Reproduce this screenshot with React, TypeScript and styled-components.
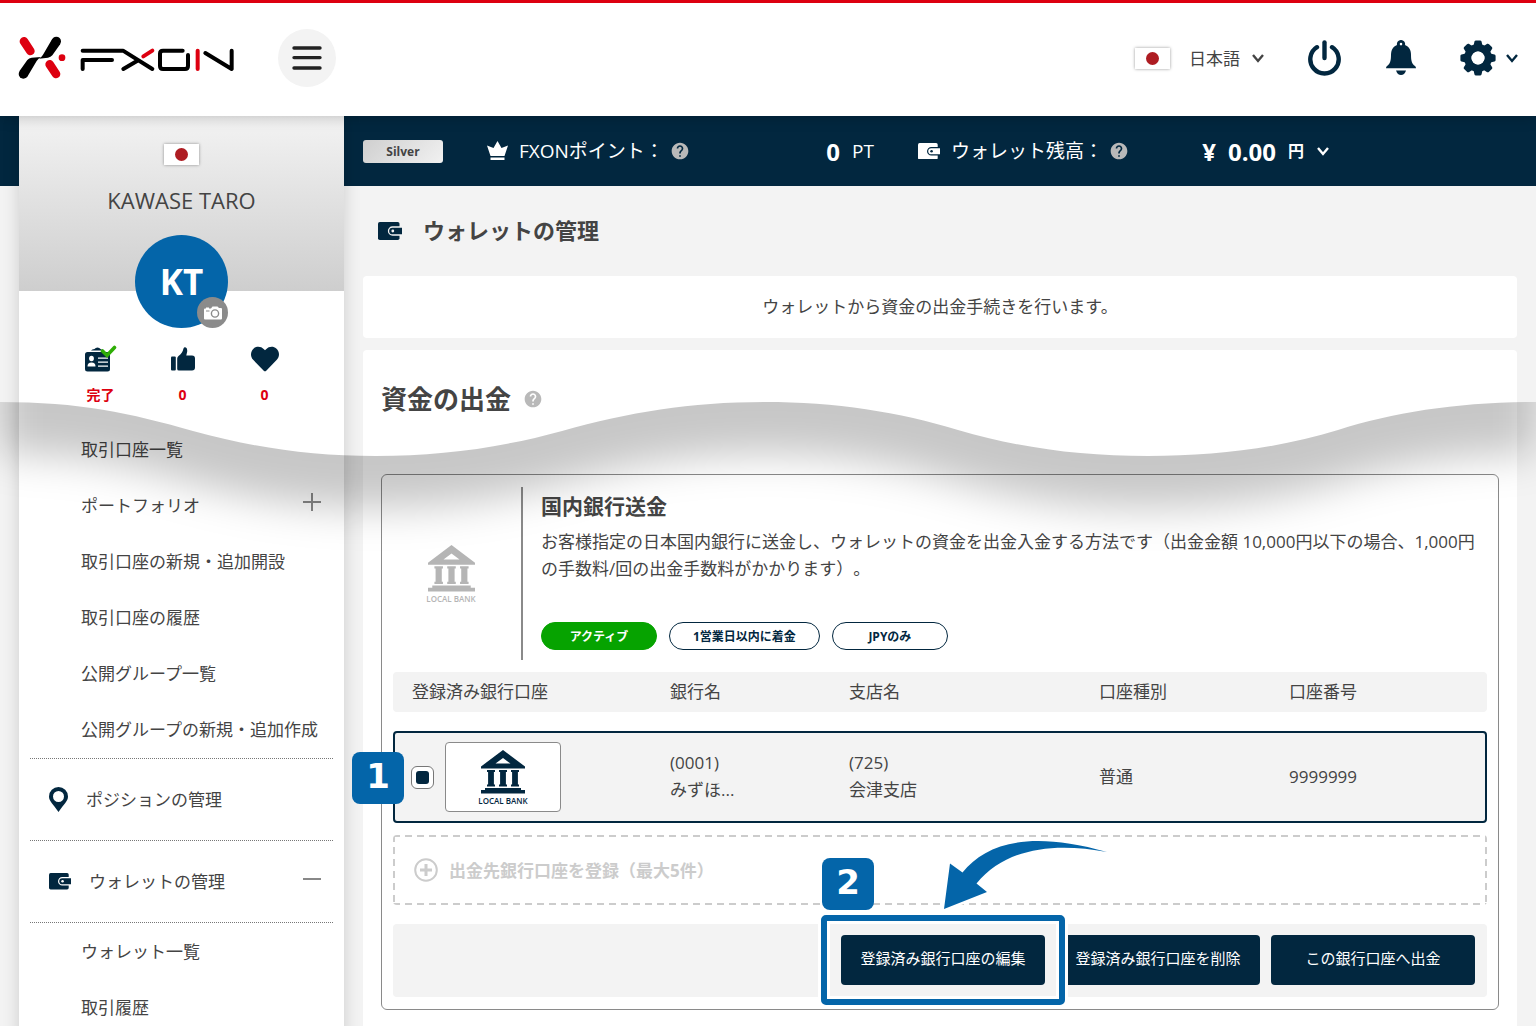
import React from "react";
import styled, { createGlobalStyle } from "styled-components";
import { FaHeart } from "react-icons/fa";
import { MdHelp } from "react-icons/md";

const navy = "#02273f";
const blue = "#0465a9";
const red = "#dd0010";
const ink = "#444";
const pale = "#f3f3f3";
const line = "#8a8a8a";

const Global = createGlobalStyle`
  *, *::before, *::after { box-sizing: border-box; }
  body {
    margin: 0;
    background: ${pale};
    color: ${ink};
    font: 400 17px/27px "Open Sans", "Noto Sans CJK JP", sans-serif;
    text-spacing-trim: space-all;
  }
  h1, h2, h3, p, ul { margin: 0; padding: 0; }
  ul { list-style: none; }
  button, select, input { font: inherit; color: inherit; margin: 0; }
  button { padding: 0; border: 0; background: none; cursor: pointer; }
  a { color: inherit; text-decoration: none; }
  svg { display: block; flex: none; }
`;

const Page = styled.div`
  position: relative;
  height: 100vh;
  overflow: hidden;
`;

/* ---------- Header ---------- */

const Header = styled.header`
  position: relative;
  z-index: 2;
  display: flex;
  align-items: center;
  height: 116px;
  padding: 0 18px 3px;
  border-top: 3px solid ${red};
  background: #fff;
  box-shadow: 0 0 14px rgba(0, 0, 0, 0.25);
`;

const MenuButton = styled.button`
  display: grid;
  place-items: center;
  width: 58px;
  height: 58px;
  margin-left: 42px;
  border-radius: 50%;
  background: ${pale};
`;

const HeaderTools = styled.div`
  display: flex;
  align-items: center;
  gap: 44px;
  margin-left: auto;
`;

const Picker = styled.label<{ $gap: number }>`
  display: flex;
  align-items: center;
  gap: ${(p) => p.$gap}px;
`;

const PlainSelect = styled.select`
  appearance: none;
  padding: 0;
  border: 0;
  background: none;
  outline: 0;
`;

const ToolButton = styled.button`
  display: flex;
  align-items: center;
  gap: 10px;
  color: ${navy};
`;

const FlagBox = styled.span`
  display: grid;
  place-items: center;
  flex: none;
  width: 35px;
  height: 21px;
  margin-right: 7px;
  background: #fff;
  box-shadow: 0 0 3px rgba(0, 0, 0, 0.4);

  &::before {
    content: "";
    width: 13px;
    height: 13px;
    border-radius: 50%;
    background: #ae1c22;
  }
`;

/* ---------- Body ---------- */

const Body = styled.div`
  display: grid;
  grid-template-columns: 325px minmax(0, 1fr);
  gap: 19px;
  padding: 0 19px;
  background: linear-gradient(${navy} 70px, ${pale} 70px);
`;

const Sidebar = styled.aside`
  background: #fff;
  box-shadow: 0 0 16px rgba(0, 0, 0, 0.16);
`;

const Profile = styled.div`
  display: flex;
  flex-direction: column;
  align-items: center;
  height: 175px;
  padding-top: 28px;
  background: linear-gradient(#f3f3f3, #cecece);

  ${FlagBox} { margin: 0; }
`;

const UserName = styled.p`
  margin: 22px 0 21px;
  font-size: 22px;
`;

const Avatar = styled.div`
  position: relative;
  display: grid;
  place-items: center;
  flex: none;
  width: 93px;
  height: 93px;
  border-radius: 50%;
  background: ${blue};
  color: #fff;
  font-size: 35px;
  font-weight: 700;
`;

const CameraButton = styled.button`
  position: absolute;
  right: 0;
  bottom: 0;
  display: grid;
  place-items: center;
  width: 31px;
  height: 31px;
  border-radius: 50%;
  background: #8b8b8b;
`;

const Stats = styled.ul`
  display: grid;
  grid-template-columns: repeat(3, 82px);
  justify-content: center;
  height: 130px;
  padding: 54px 0 0 2px;
`;

const Stat = styled.li`
  display: flex;
  flex-direction: column;
  align-items: center;
  gap: 8px;
  color: ${red};
  font-size: 14px;
  font-weight: 700;

  svg { height: 28px; color: ${navy}; }
`;

const SubList = styled.ul`
  padding-bottom: 1px;
`;

const SubItem = styled.li`
  display: flex;
  align-items: center;
  justify-content: space-between;
  height: 56px;
  padding: 0 23px 0 62px;
  white-space: nowrap;
`;

const Section = styled.div`
  display: flex;
  align-items: center;
  gap: 18px;
  height: 82px;
  margin: 0 11px;
  padding: 0 12px 0 19px;
  border-top: 1px dotted #777;
`;

const SectionEnd = styled.div`
  margin: 0 11px;
  border-top: 1px dotted #777;
`;

const Toggle = styled.button`
  margin-left: auto;
  padding-bottom: 6px;
`;

/* ---------- Main ---------- */

const StatusBar = styled.div`
  display: flex;
  align-items: center;
  gap: 44px;
  height: 70px;
  color: #fff;
  font-size: 19px;
`;

const Rank = styled.span`
  width: 80px;
  height: 23px;
  border-radius: 3px;
  background: linear-gradient(135deg, #cfcfcf, #f1f1f1);
  color: ${ink};
  font-size: 12px;
  font-weight: 700;
  line-height: 23px;
  text-align: center;
`;

const Balance = styled.div<{ $width: number }>`
  display: flex;
  align-items: center;
  gap: 11px;
  width: ${(p) => p.$width}px;
  white-space: nowrap;
`;

const Amount = styled.span`
  display: flex;
  align-items: center;
  gap: 12px;
  margin-left: auto;

  strong { font-size: 24px; }
  select { font-size: 16px; font-weight: 700; }
`;

const Help = styled.span`
  margin-left: -5px;
  color: #b9b9b9;
  svg { width: 20px; height: 20px; }
`;

const PageTitle = styled.h1`
  display: flex;
  align-items: center;
  gap: 21px;
  height: 90px;
  padding: 0 0 1px 15px;
  font-size: 22px;
`;

const Notice = styled.p`
  margin-bottom: 12px;
  padding: 17px 20px 18px;
  border-radius: 4px;
  background: #fff;
  text-align: center;
`;

const Card = styled.section`
  padding: 33px 18px;
  border-radius: 4px 4px 0 0;
  background: #fff;
`;

const CardTitle = styled.h2`
  display: flex;
  align-items: center;
  gap: 17px;
  margin-bottom: 59px;
  font-size: 26px;
  line-height: 32px;
`;

const Method = styled.div`
  padding: 12px 11px;
  border: 1px solid ${line};
  border-radius: 6px;
`;

const Intro = styled.div`
  display: grid;
  grid-template-columns: 130px minmax(0, 1fr);
  margin-bottom: 12px;
`;

const IntroLogo = styled.div`
  display: grid;
  place-items: center;
  padding-right: 12px;
  border-right: 2px solid ${line};
`;

const IntroText = styled.div`
  padding: 6px 0 10px 18px;

  h3 { margin-bottom: 8px; font-size: 21px; line-height: 27px; }
`;

const Tags = styled.ul`
  display: flex;
  gap: 12px;
  margin-top: 40px;
`;

const Tag = styled.li<{ $active?: boolean }>`
  min-width: 116px;
  padding: 1px 23px 0;
  border: 1px solid ${(p) => (p.$active ? "#06a300" : navy)};
  border-radius: 14px;
  background: ${(p) => (p.$active ? "#06a300" : "#fff")};
  color: ${(p) => (p.$active ? "#fff" : navy)};
  font-size: 12px;
  font-weight: 700;
  line-height: 25px;
  text-align: center;
`;

const BankMark = styled.span<{ $muted?: boolean }>`
  display: flex;
  flex-direction: column;
  align-items: center;
  gap: 3px;
  color: ${(p) => (p.$muted ? "#b5b5b5" : navy)};
  font: 600 8px/8px "Open Sans", sans-serif;
`;

const Accounts = styled.table`
  display: block;
  margin-bottom: 12px;

  thead, tbody { display: block; }
  thead { margin-bottom: 19px; }
  th, td { padding: 0; font-weight: 400; text-align: left; }
  th { padding-bottom: 1px; }
  td + td { padding-bottom: 2px; }
`;

const AccountRow = styled.tr<{ $selected?: boolean }>`
  position: relative;
  display: grid;
  grid-template-columns: 275fr 179fr 250fr 190fr 196fr;
  align-items: center;
  height: ${(p) => (p.$selected ? 92 : 40)}px;
  border: 2px solid ${(p) => (p.$selected ? navy : pale)};
  border-radius: 4px;
  background: ${pale};

  th:first-child { padding-left: 17px; }
`;

const AccountPick = styled.label`
  display: flex;
  align-items: center;
  gap: 11px;
  padding-left: 16px;
`;

const Radio = styled.input`
  appearance: none;
  display: grid;
  place-items: center;
  width: 23px;
  height: 23px;
  border: 1px solid #777;
  border-radius: 6px;
  background: #fff;

  &:checked::before {
    content: "";
    width: 13px;
    height: 13px;
    border-radius: 3px;
    background: ${navy};
  }
`;

const LogoFrame = styled.span`
  display: grid;
  place-items: center;
  width: 116px;
  height: 70px;
  border: 1px solid ${line};
  border-radius: 4px;
  background: #fff;
`;

const dashes = (angle: number) =>
  `repeating-linear-gradient(${angle}deg, #ccc 0 7px, transparent 7px 12px)`;

const AddAccount = styled.button`
  display: flex;
  align-items: center;
  gap: 11px;
  width: 100%;
  height: 70px;
  margin-bottom: 19px;
  padding: 0 21px;
  border-radius: 4px;
  background:
    ${dashes(90)} top / 100% 2px no-repeat,
    ${dashes(90)} bottom / 100% 2px no-repeat,
    ${dashes(180)} left / 2px 100% no-repeat,
    ${dashes(180)} right / 2px 100% no-repeat;
  color: #ccc;
  font-weight: 700;
`;

const Actions = styled.div`
  display: flex;
  justify-content: flex-end;
  gap: 11px;
  padding: 11px 12px 12px;
  border-radius: 4px;
  background: ${pale};
`;

const ActionSlot = styled.div`
  position: relative;
  z-index: 1;
`;

const ActionButton = styled.button`
  width: 204px;
  height: 50px;
  padding-bottom: 3px;
  border-radius: 4px;
  background: ${navy};
  color: #fff;
  font-size: 15px;
`;

/* ---------- Step annotations ---------- */

const StepBadge = styled.span<{ $left: number; $top: number }>`
  position: absolute;
  left: ${(p) => p.$left}px;
  top: ${(p) => p.$top}px;
  width: 52px;
  height: 52px;
  border-radius: 8px;
  background: ${blue};
  color: #fff;
  font: 700 34px/48px "DejaVu Sans", sans-serif;
  text-align: center;
`;

const Highlight = styled.span`
  position: absolute;
  inset: -20px;
  border: 6px solid ${blue};
  border-radius: 5px;
  box-shadow: 0 0 0 3px #fff, inset 0 0 0 3px #fff;
  pointer-events: none;
`;

const ArrowSvg = styled.svg`
  position: absolute;
  left: 103px;
  top: -95px;
  overflow: visible;
  pointer-events: none;
`;

const WaveSvg = styled.svg`
  position: absolute;
  z-index: 1;
  left: 0;
  top: 402px;
  width: 100%;
  height: 200px;
  pointer-events: none;
`;

/* ---------- Drawings ---------- */

const Logo = () => (
  <svg width="218" height="44" viewBox="55 109 654 132" fill="none" strokeLinecap="round" role="img" aria-label="FXON">
    <g stroke={red} strokeWidth="26">
      <path d="M73 125 92 154" />
      <path d="M150 194 169 223" />
    </g>
    <circle cx="187" cy="174" r="10" fill={red} />
    <g fill="#000">
      <circle cx="170" cy="125" r="14" />
      <path d="M158 117 182 133 158 167Q153 173 145 174L118 177Q126 172 130 165Z" />
      <circle cx="71" cy="223" r="14" />
      <path d="M59 215 83 181Q88 175 96 174L124 172Q116 177 111 184L83 231Z" />
    </g>
    <g stroke="#000" strokeWidth="12" strokeLinejoin="round">
      <path d="M249 153H370L458 208" />
      <path d="M249 208V181H337" />
      <path d="M371 208 412 184" />
      <path d="M549 153H490Q481 153 481 162V199Q481 208 490 208H556Q565 208 565 199V166" />
      <path d="M617 160 696 208V153" />
    </g>
    <g stroke={red} strokeWidth="12">
      <path d="M431 170 458 153" />
      <path d="M594 153V208" />
    </g>
  </svg>
);

const Chevron = () => (
  <svg width="12" height="9" viewBox="0 0 12 9" fill="none" stroke="currentColor" strokeWidth="2.4">
    <path d="M1 1 6 7 11 1" />
  </svg>
);

const MenuIcon = () => (
  <svg width="30" height="24" viewBox="0 0 30 24" stroke="#222" strokeWidth="3.4" strokeLinecap="round">
    <path d="M2 2H28M2 11.6H28M2 22H28" />
  </svg>
);

const PowerIcon = () => (
  <svg width="34" height="36" viewBox="0 0 34 36" fill="none" stroke="currentColor" strokeWidth="4.4" strokeLinecap="round">
    <path d="M16.500 2.500V18" />
    <path d="M9 7.200A14.200 14.200 0 1 0 24 7.200" />
  </svg>
);

const BellIcon = () => (
  <svg width="30" height="36" viewBox="0 0 30 36" fill="currentColor">
    <path
      fillRule="evenodd"
      d="M15 0A4 4 0 0 1 19 5C23 6.5 25 10 25 15C25 21 26 24 29 26Q30 27 30 28.300H0Q0 27 1 26C4 24 5 21 5 15C5 10 7 6.500 11 5A4 4 0 0 1 15 0ZM15 2.800A1.300 1.300 0 1 0 15 5.400A1.300 1.300 0 0 0 15 2.800Z"
    />
    <path d="M10 30.500H20Q18.500 35 15 35Q11.500 35 10 30.500Z" />
  </svg>
);

const GearIcon = () => (
  <svg width="36" height="36" viewBox="-18 -18 36 36" fill="currentColor">
    {[0, 45, 90, 135, 180, 225, 270, 315].map((a) => (
      <path key={a} transform={`rotate(${a})`} d="M-5 -10 -3.500 -16.500Q-3.200 -17.600 -2 -17.600H2Q3.200 -17.600 3.500 -16.500L5 -10Z" />
    ))}
    <circle r="10.200" fill="none" stroke="currentColor" strokeWidth="7.400" />
    <circle r="6.500" fill="#fff" />
  </svg>
);

const WalletIcon = ({ size = 24, gap = pale }: { size?: number; gap?: string }) => (
  <svg width={size} height={size * 0.75} viewBox="0 0 24 18" fill="currentColor">
    <rect width="21.500" height="18" rx="1.800" />
    <path d="M26 5H14.500A4 4 0 0 0 14.500 13H26Z" stroke={gap} strokeWidth="1.300" />
    <circle cx="14.800" cy="9" r="1.400" fill={gap} />
  </svg>
);

const CrownIcon = () => (
  <svg width="21" height="20" viewBox="0 0 21 20" fill="currentColor">
    <path d="M10.500 0 14.500 7 21 4.500 17.500 15H3.500L0 4.500 6.500 7Z" />
    <path d="M3.500 16.500H17.500V19H3.500Z" />
  </svg>
);

const CameraIcon = () => (
  <svg width="18" height="14" viewBox="0 0 18 14">
    <path fill="#fff" d="M1 2.500H2V1.500H5V2.500H7L8.500 .5H13.500L15 2H17Q18 2 18 3V12.500Q18 13.500 17 13.500H1Q0 13.500 0 12.500V3.500Q0 2.500 1 2.500Z" />
    <circle cx="11" cy="7.500" r="3.600" fill="none" stroke="#8b8b8b" strokeWidth="1.400" />
    <path d="M2 5H5.500" stroke="#8b8b8b" />
  </svg>
);

const IdIcon = () => (
  <svg width="32" height="28" viewBox="0 0 32 28" fill="currentColor">
    <path d="M6 5.500Q7 4 9.500 4Q10.500 2.500 12.500 2.500Q14.500 2.500 15.500 4L18 5.500Z" />
    <rect y="7" width="25" height="19.500" rx="2.500" />
    <g fill="#fff">
      <ellipse cx="6.500" cy="13.500" rx="2.400" ry="2.800" />
      <path d="M2.500 21.500Q2.500 17.500 6.500 17.500Q10.500 17.500 10.500 21.500Z" />
      <path d="M13 12.500H23V13.800H13ZM13 16.500H23V17.800H13ZM13 20.500H23V21.800H13Z" />
    </g>
    <path d="M17.500 6 22 10.500 29.500 2.500" fill="none" stroke="#2fae06" strokeWidth="3.600" strokeLinecap="round" />
  </svg>
);

const ThumbIcon = () => (
  <svg width="24" height="28" viewBox="0 -2 24 28" fill="currentColor">
    <rect y="9.500" width="4.800" height="14" rx="1" />
    <path d="M6.200 11.500Q6.200 10 7.500 9Q11.500 6 12.500 1.500Q13 0 14.200 .2Q16.500 .8 16.200 4.500L15.300 8.500H21Q24 8.500 24 11.500V20.500Q24 23.500 21 23.500H8Q6.200 23.500 6.200 22Z" />
  </svg>
);

const PinIcon = () => (
  <svg width="19" height="25" viewBox="0 0 19 25" fill={navy}>
    <path
      fillRule="evenodd"
      d="M9.500 0A9.500 9.500 0 0 1 19 9.500C19 14 15 17 9.500 25C4 17 0 14 0 9.500A9.500 9.500 0 0 1 9.500 0ZM9.500 4A5.500 5.500 0 1 0 9.500 15A5.500 5.500 0 0 0 9.500 4Z"
    />
  </svg>
);

const ToggleIcon = ({ open }: { open?: boolean }) => (
  <svg width="18" height="18" viewBox="0 0 18 18" stroke="#888" strokeWidth="2">
    <path d={open ? "M0 9H18" : "M0 9H18M9 0V18"} />
  </svg>
);

const BankIcon = ({ size }: { size: number }) => (
  <svg width={size} height={size} viewBox="0 0 44 44" fill="currentColor">
    <path fillRule="evenodd" d="M22 0 44 16.500V18.500H0V16.500ZM22 8 14.500 13.500H29.500Z" />
    {[6, 18, 30].map((x) => (
      <path key={x} transform={`translate(${x} 20)`} d="M0 0H8V2H6.900V14.500H8V16.500H0V14.500H1.100V2H0Z" />
    ))}
    <path d="M4 38H40V40H44V43.500H0V40H4Z" />
  </svg>
);

const PlusCircle = () => (
  <svg width="24" height="24" viewBox="0 0 24 24" fill="none" stroke="currentColor">
    <circle cx="12" cy="12" r="10.800" strokeWidth="2" />
    <path d="M12 6V18M6 12H18" strokeWidth="3" />
  </svg>
);

const Arrow = () => (
  <ArrowSvg width="163" height="69" viewBox="0 0 163 69">
    <path
      fill={blue}
      stroke="#fff"
      strokeWidth="5"
      paintOrder="stroke"
      d="M0 69 6 23.500 18.500 32.500C42 3 86 -10 163 12C110 2 62 8 32.500 43.500L43 52Z"
    />
  </ArrowSvg>
);

const wave =
  "C80 0 130 11 193 29C256 46 310 54 376 54C440 54 500 46 562 29C630 10 690 0 765 0C835 0 900 10 958 28C1020 46 1080 54 1148 54C1215 54 1280 46 1338 28C1395 10 1460 0 1536 0";

const WaveShadow = () => (
  <WaveSvg viewBox="0 0 1536 200" preserveAspectRatio="none" aria-hidden>
    <defs>
      <clipPath id="below-wave">
        <path d={`M0 0${wave}V200H0Z`} />
      </clipPath>
      <filter
        id="soft"
        filterUnits="userSpaceOnUse"
        x="-80"
        y="-140"
        width="1700"
        height="400"
        colorInterpolationFilters="sRGB"
      >
        <feGaussianBlur stdDeviation="20" />
      </filter>
    </defs>
    <g clipPath="url(#below-wave)">
      <g filter="url(#soft)">
        <path transform="translate(0 52)" d={`M0 0${wave}V-160H0Z`} fill="#000" fillOpacity="0.22" />
      </g>
    </g>
  </WaveSvg>
);

/* ---------- Data ---------- */

const accountLinks = [
  "取引口座一覧",
  "ポートフォリオ",
  "取引口座の新規・追加開設",
  "取引口座の履歴",
  "公開グループ一覧",
  "公開グループの新規・追加作成",
];
const walletLinks = ["ウォレット一覧", "取引履歴"];
const columns = ["登録済み銀行口座", "銀行名", "支店名", "口座種別", "口座番号"];

const LocalBank = ({ size, muted }: { size: number; muted?: boolean }) => (
  <BankMark $muted={muted}>
    <BankIcon size={size} />
    LOCAL BANK
  </BankMark>
);

export default function App() {
  return (
    <Page>
      <Global />
      <Header>
        <Logo />
        <MenuButton aria-label="メニュー">
          <MenuIcon />
        </MenuButton>
        <HeaderTools>
          <Picker $gap={12}>
            <FlagBox />
            <PlainSelect aria-label="言語">
              <option>日本語</option>
            </PlainSelect>
            <Chevron />
          </Picker>
          <ToolButton aria-label="ログアウト">
            <PowerIcon />
          </ToolButton>
          <ToolButton aria-label="通知">
            <BellIcon />
          </ToolButton>
          <ToolButton aria-label="設定">
            <GearIcon />
            <Chevron />
          </ToolButton>
        </HeaderTools>
      </Header>

      <Body>
        <Sidebar>
          <Profile>
            <FlagBox />
            <UserName>KAWASE TARO</UserName>
            <Avatar>
              KT
              <CameraButton aria-label="写真を変更">
                <CameraIcon />
              </CameraButton>
            </Avatar>
          </Profile>
          <Stats>
            <Stat>
              <IdIcon />
              完了
            </Stat>
            <Stat>
              <ThumbIcon />0
            </Stat>
            <Stat>
              <FaHeart size={28} />0
            </Stat>
          </Stats>
          <nav>
            <SubList>
              {accountLinks.map((label) => (
                <SubItem key={label}>
                  <a href="#account">{label}</a>
                  {label === "ポートフォリオ" && (
                    <Toggle aria-label="開く">
                      <ToggleIcon />
                    </Toggle>
                  )}
                </SubItem>
              ))}
            </SubList>
            <Section>
              <PinIcon />
              <a href="#position">ポジションの管理</a>
            </Section>
            <Section>
              <ToolButton as="span">
                <WalletIcon size={22} gap="#fff" />
              </ToolButton>
              <a href="#wallet">ウォレットの管理</a>
              <Toggle aria-label="閉じる">
                <ToggleIcon open />
              </Toggle>
            </Section>
            <SectionEnd />
            <SubList>
              {walletLinks.map((label) => (
                <SubItem key={label}>
                  <a href="#wallet">{label}</a>
                </SubItem>
              ))}
            </SubList>
          </nav>
        </Sidebar>

        <main>
          <StatusBar>
            <Rank>Silver</Rank>
            <Balance $width={387}>
              <CrownIcon />
              <span>FXONポイント：</span>
              <Help>
                <MdHelp />
              </Help>
              <Amount>
                <strong>0</strong>
                <span>PT</span>
              </Amount>
            </Balance>
            <Balance $width={411}>
              <WalletIcon size={22} gap={navy} />
              <span>ウォレット残高：</span>
              <Help>
                <MdHelp />
              </Help>
              <Amount>
                <strong>¥</strong>
                <strong>0.00</strong>
                <Picker $gap={12}>
                  <PlainSelect aria-label="通貨">
                    <option>円</option>
                  </PlainSelect>
                  <Chevron />
                </Picker>
              </Amount>
            </Balance>
          </StatusBar>

          <PageTitle>
            <ToolButton as="span">
              <WalletIcon />
            </ToolButton>
            ウォレットの管理
          </PageTitle>

          <Notice>ウォレットから資金の出金手続きを行います。</Notice>

          <Card>
            <CardTitle>
              資金の出金
              <Help>
                <MdHelp />
              </Help>
            </CardTitle>

            <Method>
              <Intro>
                <IntroLogo>
                  <LocalBank size={47} muted />
                </IntroLogo>
                <IntroText>
                  <h3>国内銀行送金</h3>
                  <p>
                    お客様指定の日本国内銀行に送金し、ウォレットの資金を出金入金する方法です（出金金額
                    10,000円以下の場合、1,000円の手数料/回の出金手数料がかかります）。
                  </p>
                  <Tags>
                    <Tag $active>アクティブ</Tag>
                    <Tag>1営業日以内に着金</Tag>
                    <Tag>JPYのみ</Tag>
                  </Tags>
                </IntroText>
              </Intro>

              <Accounts>
                <thead>
                  <AccountRow>
                    {columns.map((c) => (
                      <th key={c} scope="col">
                        {c}
                      </th>
                    ))}
                  </AccountRow>
                </thead>
                <tbody>
                  <AccountRow $selected>
                    <td>
                      <AccountPick>
                        <Radio type="radio" name="account" defaultChecked />
                        <LogoFrame>
                          <LocalBank size={44} />
                        </LogoFrame>
                      </AccountPick>
                      <StepBadge $left={-43} $top={19}>
                        1
                      </StepBadge>
                    </td>
                    <td>
                      (0001)
                      <br />
                      みずほ...
                    </td>
                    <td>
                      (725)
                      <br />
                      会津支店
                    </td>
                    <td>普通</td>
                    <td>9999999</td>
                  </AccountRow>
                </tbody>
              </Accounts>

              <AddAccount>
                <PlusCircle />
                出金先銀行口座を登録（最大5件）
              </AddAccount>

              <Actions>
                <ActionSlot>
                  <ActionButton>登録済み銀行口座の編集</ActionButton>
                  <Highlight />
                  <StepBadge $left={-19} $top={-77}>
                    2
                  </StepBadge>
                  <Arrow />
                </ActionSlot>
                <ActionButton>登録済み銀行口座を削除</ActionButton>
                <ActionButton>この銀行口座へ出金</ActionButton>
              </Actions>
            </Method>
          </Card>
        </main>
      </Body>
      <WaveShadow />
    </Page>
  );
}
